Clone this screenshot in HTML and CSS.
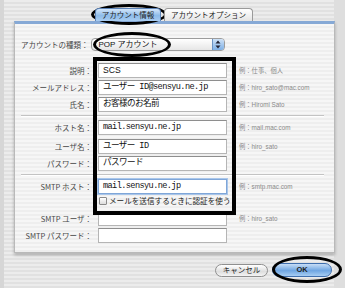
FILE: index.html
```html
<!DOCTYPE html>
<html lang="ja">
<head>
    <meta charset="UTF-8">
    <title>アカウント情報</title>
    <link rel="stylesheet" href="styles.css">
</head>
<body>
    <div class="screen">
        <div class="tabs">
            <div class="tab tab-active">アカウント情報</div>
            <div class="tab">アカウントオプション</div>
        </div>
        <div class="panel">
            <div class="type-row">
                <span class="label">アカウントの種類：</span>
                <div class="popup">
                    <span class="popup-text">POP アカウント</span>
                    <span class="popup-arrows">
                        <svg width="6" height="9" viewBox="0 0 6 9"><path d="M3 0.5 L5.5 3.5 H0.5 Z M3 8.5 L5.5 5.5 H0.5 Z" fill="#223"/></svg>
                    </span>
                </div>
            </div>
            <div class="form">
                <div class="row">
                    <span class="label">説明：</span>
                    <div class="field prop">SCS</div>
                    <span class="hint">例：仕事、個人</span>
                </div>
                <div class="row">
                    <span class="label">メールアドレス：</span>
                    <div class="field">ユーザー ID@sensyu.ne.jp</div>
                    <span class="hint">例：hiro_sato@mac.com</span>
                </div>
                <div class="row">
                    <span class="label">氏名：</span>
                    <div class="field">お客様のお名前</div>
                    <span class="hint">例：Hiromi Sato</span>
                </div>
                <div class="sep"></div>
                <div class="row row-gap">
                    <span class="label">ホスト名：</span>
                    <div class="field">mail.sensyu.ne.jp</div>
                    <span class="hint">例：mail.mac.com</span>
                </div>
                <div class="row">
                    <span class="label">ユーザ名：</span>
                    <div class="field">ユーザー ID</div>
                    <span class="hint">例：hiro_sato</span>
                </div>
                <div class="row">
                    <span class="label">パスワード：</span>
                    <div class="field">パスワード</div>
                    <span class="hint"></span>
                </div>
                <div class="sep"></div>
                <div class="row row-smtp">
                    <span class="label">SMTP ホスト：</span>
                    <div class="field field-focus">mail.sensyu.ne.jp</div>
                    <span class="hint">例：smtp.mac.com</span>
                </div>
                <div class="check-row">
                    <span class="checkbox"></span>
                    <span class="check-text">メールを送信するときに認証を使う</span>
                </div>
                <div class="row row-user">
                    <span class="label">SMTP ユーザ：</span>
                    <div class="field"></div>
                    <span class="hint">例：hiro_sato</span>
                </div>
                <div class="row">
                    <span class="label">SMTP パスワード：</span>
                    <div class="field"></div>
                    <span class="hint"></span>
                </div>
            </div>
        </div>
        <div class="buttons">
            <div class="btn">キャンセル</div>
            <div class="btn btn-default">OK</div>
        </div>

        <div class="mark mark-tab"></div>
        <div class="mark mark-popup"></div>
        <div class="mark mark-fields"></div>
        <div class="mark mark-ok"></div>
    </div>
</body>
</html>
```

FILE: styles.css
```css
* {
    box-sizing: border-box;
}
body {
    margin: 0;
    overflow: hidden;
    font-family: "Liberation Sans", "Noto Sans CJK JP", sans-serif;
}
.screen {
    position: relative;
    width: 345px;
    height: 288px;
    background: repeating-linear-gradient(#ececec 0 2px, #e1e1e1 2px 4px);
    border-left: 4px solid #d6d6d6;
    border-right: 11px solid #dedede;
    padding-top: 8px;
}
.tabs {
    display: flex;
    justify-content: center;
    padding-left: 10px;
    gap: 3px;
    height: 13px;
    position: relative;
    z-index: 1;
}
.tab {
    font-family: "Noto Sans CJK JP", sans-serif;
    font-size: 7.5px;
    line-height: 12px;
    color: #222;
    padding: 0 6px;
    white-space: nowrap;
    border: 1px solid #9a9a9a;
    border-bottom: none;
    border-radius: 4px 4px 0 0;
    background: linear-gradient(#ffffff, #e4e4e4);
}
.tab-active {
    width: 66px;
    text-align: center;
    padding: 0;
    background: linear-gradient(#d4e6fa, #8dbbe9 55%, #a9cdf2);
    border-color: #5d84b8;
}
.panel {
    margin: 0 -1px 0 10px;
    height: 232px;
    border: 1px solid #b9b9b9;
    border-top: 3px solid #86a9d6;
    background: repeating-linear-gradient(#f6f6f6 0 2px, #eeeeee 2px 4px);
    box-shadow: 0 2px 3px rgba(0, 0, 0, 0.25);
    padding: 0 0 0 6px;
}
.label {
    font-family: "Noto Sans CJK JP", sans-serif;
    font-size: 7.5px;
    line-height: 10px;
    color: #474747;
    white-space: nowrap;
}
.type-row {
    display: flex;
    align-items: center;
    margin-top: 14px;
    height: 13px;
}
.popup {
    display: flex;
    align-items: center;
    width: 134px;
    height: 13px;
    margin-left: 2px;
    border: 1px solid #9c9c9c;
    border-radius: 4px;
    background: linear-gradient(#ffffff, #e6e6e6);
    overflow: hidden;
}
.popup-text {
    flex: 1;
    font-family: "Liberation Sans", "Noto Sans CJK JP", sans-serif;
    font-size: 8px;
    color: #111;
    padding-left: 7px;
    line-height: 11px;
}
.popup-arrows {
    width: 12px;
    height: 100%;
    display: flex;
    align-items: center;
    justify-content: center;
    background: linear-gradient(#cfe2f7, #7eb0e6);
    border-left: 1px solid #6b93c4;
}
.form {
    margin-top: 11px;
}
.row {
    display: flex;
    align-items: center;
    height: 17px;
}
.row .label {
    width: 74px;
    padding-right: 3px;
    text-align: right;
}
.row-gap {
    margin-bottom: 2px;
}
.row-smtp {
    margin-top: 1px;
}
.row-user {
    margin-top: 3px;
}
.field {
    width: 129px;
    height: 15px;
    margin-left: 3px;
    background: #fff;
    border: 1px solid #b5b5b5;
    border-top-color: #8e8e8e;
    font-family: "Liberation Mono", "Noto Sans CJK JP", monospace;
    font-size: 8.6px;
    letter-spacing: -0.6px;
    line-height: 13px;
    color: #111;
    padding-left: 4px;
    white-space: nowrap;
    overflow: hidden;
}
.field.prop {
    font-family: "Liberation Sans", sans-serif;
    letter-spacing: 0;
}
.field-focus {
    border: 1px solid #7fa6d8;
    box-shadow: 0 0 0 1px #a9c6ea;
}
.hint {
    margin-left: 12px;
    font-family: "Liberation Sans", "Noto Sans CJK JP", sans-serif;
    font-size: 6.3px;
    color: #8a8a8a;
    white-space: nowrap;
}
.sep {
    height: 2px;
    margin: 2px 10px 2px 0;
    border-top: 1px solid #c3c3c3;
    border-bottom: 1px solid #ffffff;
}
.check-row {
    display: flex;
    align-items: center;
    height: 12px;
    margin-left: 78px;
    width: 131px;
}
.checkbox {
    flex: none;
    width: 8px;
    height: 8px;
    border: 1px solid #8a8a8a;
    border-radius: 1px;
    background: linear-gradient(#ffffff, #dcdcdc);
}
.check-text {
    margin-left: 2px;
    font-family: "Noto Sans CJK JP", sans-serif;
    font-size: 7.6px;
    line-height: 12px;
    color: #222;
    white-space: nowrap;
}
.buttons {
    display: flex;
    justify-content: flex-end;
    gap: 4px;
    margin: 10px 2px 0 0;
}
.btn {
    font-family: "Liberation Sans", "Noto Sans CJK JP", sans-serif;
    font-size: 7.5px;
    line-height: 11px;
    text-align: center;
    color: #222;
    width: 53px;
    height: 13px;
    border: 1px solid #8f8f8f;
    border-radius: 7px;
    background: linear-gradient(#ffffff, #dedede 60%, #f4f4f4);
    margin-top: 1px;
}
.btn-default {
    width: 60px;
    height: 14px;
    margin-top: 0;
    font-weight: bold;
    border-color: #3f6fae;
    background: linear-gradient(#c7ddf6, #6fa6e2 55%, #a7cdf3);
}
.mark {
    position: absolute;
    border: 3px solid #000;
}
.mark-tab {
    left: 87px;
    top: 4px;
    width: 76px;
    height: 21px;
    border-radius: 50%;
}
.mark-popup {
    left: 89px;
    top: 32px;
    width: 78px;
    height: 25px;
    border-radius: 50%;
}
.mark-fields {
    left: 89px;
    top: 57px;
    width: 143px;
    height: 158px;
    border-width: 4px;
}
.mark-ok {
    left: 268px;
    top: 256px;
    width: 70px;
    height: 27px;
    border-radius: 50%;
}
```
